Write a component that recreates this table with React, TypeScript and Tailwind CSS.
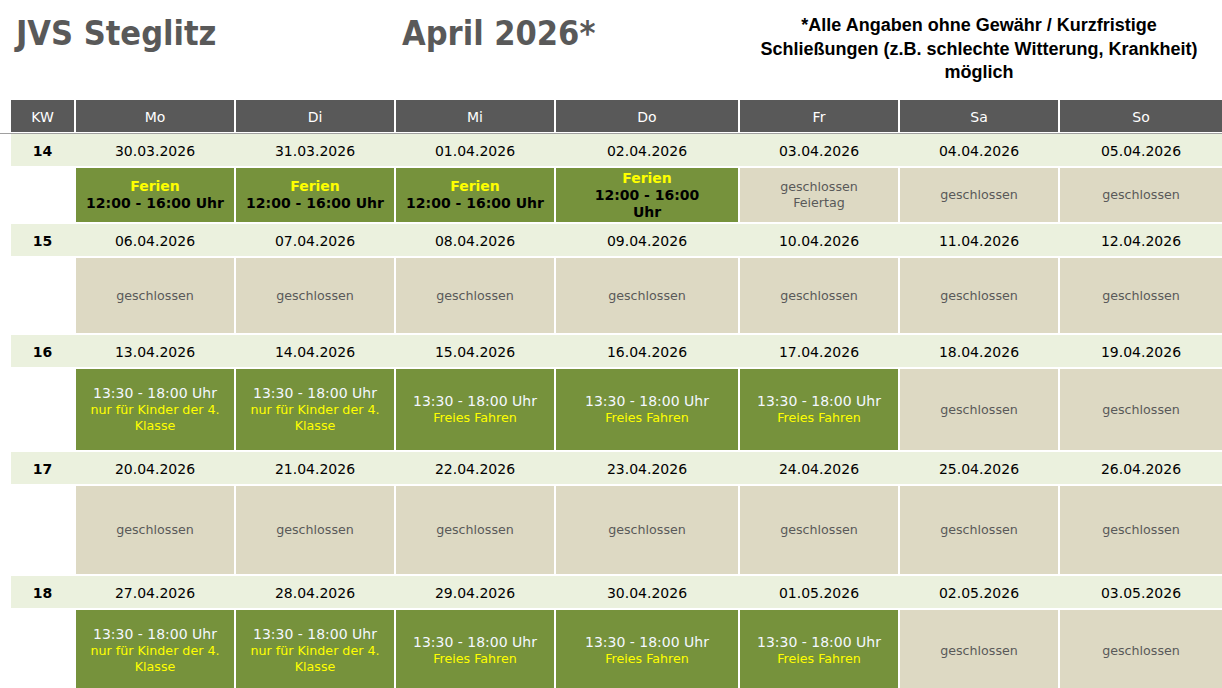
type Kind = "ferien" | "ferienWrap" | "closed" | "feiertag" | "klasse4" | "frei";

type Week = {
  kw: number;
  dates: string[];
  h: string;
  cells: Kind[];
};

const days = ["Mo", "Di", "Mi", "Do", "Fr", "Sa", "So"];

const weeks: Week[] = [
  {
    kw: 14,
    dates: ["30.03.2026", "31.03.2026", "01.04.2026", "02.04.2026", "03.04.2026", "04.04.2026", "05.04.2026"],
    h: "h-[54px]",
    cells: ["ferien", "ferien", "ferien", "ferienWrap", "feiertag", "closed", "closed"],
  },
  {
    kw: 15,
    dates: ["06.04.2026", "07.04.2026", "08.04.2026", "09.04.2026", "10.04.2026", "11.04.2026", "12.04.2026"],
    h: "h-[75px]",
    cells: ["closed", "closed", "closed", "closed", "closed", "closed", "closed"],
  },
  {
    kw: 16,
    dates: ["13.04.2026", "14.04.2026", "15.04.2026", "16.04.2026", "17.04.2026", "18.04.2026", "19.04.2026"],
    h: "h-[81px]",
    cells: ["klasse4", "klasse4", "frei", "frei", "frei", "closed", "closed"],
  },
  {
    kw: 17,
    dates: ["20.04.2026", "21.04.2026", "22.04.2026", "23.04.2026", "24.04.2026", "25.04.2026", "26.04.2026"],
    h: "h-[88px]",
    cells: ["closed", "closed", "closed", "closed", "closed", "closed", "closed"],
  },
  {
    kw: 18,
    dates: ["27.04.2026", "28.04.2026", "29.04.2026", "30.04.2026", "01.05.2026", "02.05.2026", "03.05.2026"],
    h: "h-[81px]",
    cells: ["klasse4", "klasse4", "frei", "frei", "frei", "closed", "closed"],
  },
];

const cols = "grid grid-cols-[63px_158px_158px_158px_182px_158px_158px_162px] gap-x-[2px]";

function Cell({ kind, h }: { kind: Kind; h: string }) {
  const green = `${h} bg-[#76923c] flex flex-col items-center justify-center text-center`;
  const tan = `${h} bg-[#ddd9c3] flex flex-col items-center justify-center text-center text-[#595959] text-[12.67px] leading-[16px]`;

  if (kind === "ferien" || kind === "ferienWrap") {
    return (
      <div className={`${green} font-bold text-[14px] leading-[17px]`}>
        <span className="text-[#ffff00]">Ferien</span>
        {kind === "ferien" ? (
          <span className="text-black whitespace-nowrap">12:00 - 16:00 Uhr</span>
        ) : (
          <span className="text-black">
            12:00 - 16:00
            <br />
            Uhr
          </span>
        )}
      </div>
    );
  }

  if (kind === "closed") return <div className={tan}>geschlossen</div>;

  if (kind === "feiertag") {
    return (
      <div className={tan}>
        <span>geschlossen</span>
        <span>Feiertag</span>
      </div>
    );
  }

  return (
    <div className={green}>
      <span className="text-[#f4f8ff] text-[14px] leading-[17px] whitespace-nowrap">13:30 - 18:00 Uhr</span>
      {kind === "klasse4" ? (
        <span className="text-[#ffff00] text-[12.67px] leading-[16px] px-2">nur für Kinder der 4. Klasse</span>
      ) : (
        <span className="text-[#ffff00] text-[12.67px] leading-[16px]">Freies Fahren</span>
      )}
    </div>
  );
}

export default function App() {
  return (
    <div className="w-[1222px] h-[688px] overflow-hidden bg-white font-['DejaVu_Sans',Verdana,sans-serif]">
      {/* Kopfbereich */}
      <div className="flex h-[100px]">
        <div className="w-[402px] pl-[16px] pt-[13px]">
          <h1 className="font-['DejaVu_Sans_Condensed','DejaVu_Sans',sans-serif] font-bold text-[34px] leading-[40px] text-[#595959]">
            JVS Steglitz
          </h1>
        </div>
        <div className="w-[334px] pt-[13px]">
          <h2 className="font-['DejaVu_Sans_Condensed','DejaVu_Sans',sans-serif] font-bold text-[34px] leading-[40px] text-[#595959]">
            April 2026*
          </h2>
        </div>
        <div className="w-[486px] pt-[14px] text-center font-['Liberation_Sans',Arial,sans-serif] font-bold text-[18px] leading-[23.5px] text-black">
          *Alle Angaben ohne Gewähr / Kurzfristige
          <br />
          Schließungen (z.B. schlechte Witterung, Krankheit)
          <br />
          möglich
        </div>
      </div>

      {/* Tabellenkopf */}
      <div className={`${cols} ml-[11px] h-[32px]`}>
        {["KW", ...days].map((d) => (
          <div key={d} className="bg-[#595959] text-white text-[14px] flex items-center justify-center pt-[2px]">
            {d}
          </div>
        ))}
      </div>
      <div className="h-[1px] mt-[1px] bg-[#a0a0a0]" />

      {/* Wochen */}
      <div className="ml-[11px] flex flex-col gap-y-[2px]">
        {weeks.map((w) => (
          <div key={w.kw} className="flex flex-col gap-y-[2px]">
            <div className={`${cols} h-[32px] bg-[#ebf1de] text-[14px] text-black items-center text-center pt-[2px]`}>
              <div className="font-bold">{w.kw}</div>
              {w.dates.map((d) => (
                <div key={d}>{d}</div>
              ))}
            </div>
            <div className={cols}>
              <div className={w.h} />
              {w.cells.map((c, i) => (
                <Cell key={i} kind={c} h={w.h} />
              ))}
            </div>
          </div>
        ))}
      </div>
    </div>
  );
}
